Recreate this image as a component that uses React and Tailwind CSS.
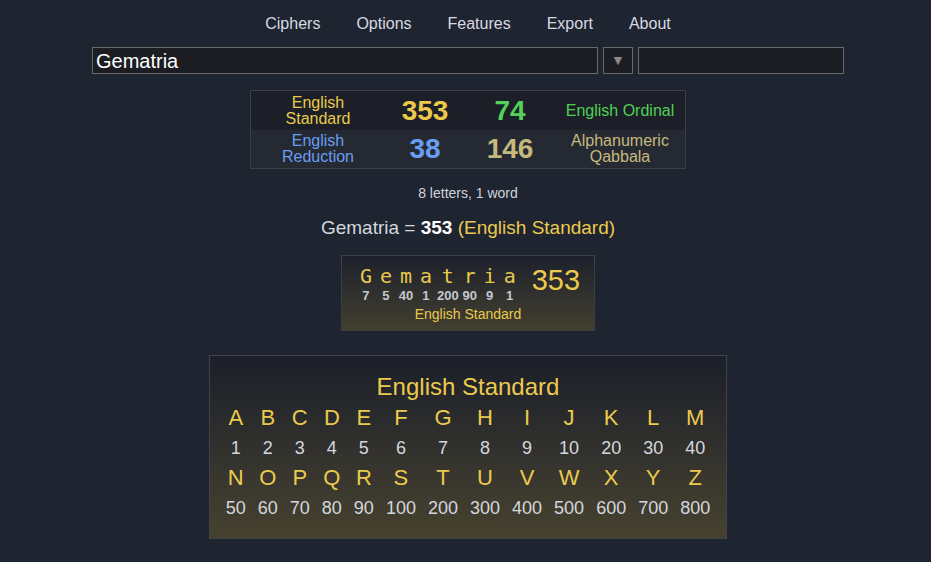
import React from "react";

const F = { fontFamily: '"Liberation Sans", Arial, sans-serif' };

const top = ["A","B","C","D","E","F","G","H","I","J","K","L","M"];
const topV = [1,2,3,4,5,6,7,8,9,10,20,30,40];
const bot = ["N","O","P","Q","R","S","T","U","V","W","X","Y","Z"];
const botV = [50,60,70,80,90,100,200,300,400,500,600,700,800];
const word = [["G",7],["e",5],["m",40],["a",1],["t",200],["r",90],["i",9],["a",1]];

export default function App() {
  return (
    <div className="w-[931px] h-[562px] bg-[#1f2431] text-[#d3d7de] overflow-hidden" style={F}>
      <nav className="flex justify-center gap-[36px] pt-[12px] h-[47px] text-[16px] text-[#d6dae0] pl-[5px]">
        <span>Ciphers</span>
        <span>Options</span>
        <span>Features</span>
        <span>Export</span>
        <span>About</span>
      </nav>
      <div className="flex pl-[92px] gap-[5px] h-[27px]">
        <div className="w-[506px] h-[27px] bg-[#1c1d22] border border-[#6a6a6a] flex items-center pl-[3px] text-[20px] text-white">Gematria</div>
        <div className="w-[30px] h-[27px] bg-[#1c1d22] border border-[#6a6a6a] flex items-center justify-center text-[#8a8a8a] text-[14px]">▼</div>
        <div className="w-[206px] h-[27px] bg-[#1c1d22] border border-[#6a6a6a]" />
      </div>
      <div className="flex justify-center mt-[16px]">
        <div className="ml-[5px] border border-[#3c3f46] w-[436px]">
          <div className="flex h-[39px] bg-[#1c1f27] items-center">
            <div className="w-[134px] text-center text-[16px] leading-[16px] text-[#e9c94b]">English<br />Standard</div>
            <div className="w-[80px] text-center text-[28px] font-bold text-[#ecc94b]">353</div>
            <div className="w-[90px] text-center text-[28px] font-bold text-[#52d257]">74</div>
            <div className="w-[130px] text-center text-[16px] text-[#4fd155]">English Ordinal</div>
          </div>
          <div className="flex h-[38px] bg-[#252932] items-center">
            <div className="w-[134px] text-center text-[16px] leading-[16px] text-[#6a9df2]">English<br />Reduction</div>
            <div className="w-[80px] text-center text-[28px] font-bold text-[#6a9df2]">38</div>
            <div className="w-[90px] text-center text-[28px] font-bold text-[#c5b97e]">146</div>
            <div className="w-[130px] text-center text-[16px] leading-[16px] text-[#c5b97e]">Alphanumeric<br />Qabbala</div>
          </div>
        </div>
      </div>
      <div className="text-center text-[14px] mt-[14px] pl-[5px] text-[#cfd3da]">8 letters, 1 word</div>
      <div className="text-center text-[19px] mt-[10px] pl-[5px] text-[#d3d7de]">
        Gematria = <b className="text-white">353</b> <span className="text-[#ecca4d]">(English Standard)</span>
      </div>
      <div className="flex justify-center mt-[12px] pl-[5px]">
        <div className="w-[254px] h-[76px] border border-[#3d3f45] bg-gradient-to-b from-[#1d212b] to-[#433f2f] flex flex-col items-center pt-[9px]">
          <div className="flex items-start">
            <div className="flex">
              {word.map(([l, v], i) => (
                <div key={i} className="min-w-[20px] px-[1px] flex flex-col items-center">
                  <span className="text-[20px] leading-[22px] text-[#e9c94b]" style={{ fontFamily: '"DejaVu Sans Mono", monospace' }}>{l}</span>
                  <span className="text-[13px] leading-[18px] font-bold text-[#c4c8cf]">{v}</span>
                </div>
              ))}
            </div>
            <span className="ml-[12px] text-[29px] leading-[34px] text-[#ecca4d] -mt-[2px]">353</span>
          </div>
          <div className="text-[14px] leading-[16px] text-[#e9c94b] mt-[1px]">English Standard</div>
        </div>
      </div>
      <div className="flex justify-center mt-[24px] pl-[5px]">
        <div className="w-[518px] h-[184px] border border-[#414349] bg-gradient-to-b from-[#1c1f29] to-[#47422f] flex flex-col items-center pt-[17px]">
          <div className="text-[24px] text-[#ecca4d] leading-[28px]">English Standard</div>
          <table className="mt-[2px] border-separate border-spacing-0">
            <tbody>
              <tr>{top.map((l) => <td key={l} className="px-[6px] text-center text-[22px] leading-[30px] text-[#ecca4d]">{l}</td>)}</tr>
              <tr>{topV.map((v) => <td key={v} className="px-[6px] text-center text-[18px] leading-[30px] text-[#d3d7de]">{v}</td>)}</tr>
              <tr>{bot.map((l) => <td key={l} className="px-[6px] text-center text-[22px] leading-[30px] text-[#ecca4d]">{l}</td>)}</tr>
              <tr>{botV.map((v) => <td key={v} className="px-[6px] text-center text-[18px] leading-[30px] text-[#d3d7de]">{v}</td>)}</tr>
            </tbody>
          </table>
        </div>
      </div>
    </div>
  );
}
